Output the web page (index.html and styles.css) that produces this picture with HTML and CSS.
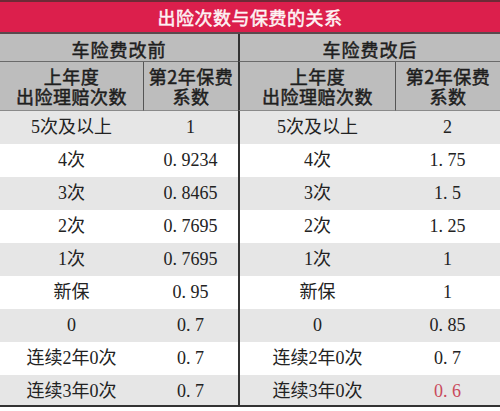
FILE: index.html
```html
<!DOCTYPE html>
<html lang="zh">
<head>
<meta charset="utf-8">
<link rel="stylesheet" href="styles.css">
</head>
<body>
<div class="sheet">
  <div class="title">出险次数与保费的关系</div>
  <div class="head">
    <div class="h1">车险费改前</div>
    <div class="h1 sep">车险费改后</div>
    <div class="h2"><span>上年度</span><span>出险理赔次数</span></div>
    <div class="h2 thin"><span>第2年保费</span><span>系数</span></div>
    <div class="h2 sep"><span>上年度</span><span>出险理赔次数</span></div>
    <div class="h2 thin"><span>第2年保费</span><span>系数</span></div>
  </div>
  <div class="row grey"><div class="c">5次及以上</div><div class="c">1</div><div class="c sep">5次及以上</div><div class="c">2</div></div>
  <div class="row"><div class="c">4次</div><div class="c">0. 9234</div><div class="c sep">4次</div><div class="c">1. 75</div></div>
  <div class="row grey"><div class="c">3次</div><div class="c">0. 8465</div><div class="c sep">3次</div><div class="c">1. 5</div></div>
  <div class="row"><div class="c">2次</div><div class="c">0. 7695</div><div class="c sep">2次</div><div class="c">1. 25</div></div>
  <div class="row grey"><div class="c">1次</div><div class="c">0. 7695</div><div class="c sep">1次</div><div class="c">1</div></div>
  <div class="row"><div class="c">新保</div><div class="c">0. 95</div><div class="c sep">新保</div><div class="c">1</div></div>
  <div class="row grey"><div class="c">0</div><div class="c">0. 7</div><div class="c sep">0</div><div class="c">0. 85</div></div>
  <div class="row"><div class="c">连续2年0次</div><div class="c">0. 7</div><div class="c sep">连续2年0次</div><div class="c">0. 7</div></div>
  <div class="row grey last"><div class="c">连续3年0次</div><div class="c">0. 7</div><div class="c sep">连续3年0次</div><div class="c red">0. 6</div></div>
</div>
</body>
</html>
```
FILE: styles.css
```css
* { box-sizing: border-box; }
html, body { margin: 0; padding: 0; background: #fff; }
.sheet { width: 500px; }
.title {
  height: 34px;
  border-top: 2px solid #6e2a36;
  border-bottom: 2px solid #5a4a4e;
  background: #dc1f4c;
  color: #fdf3f5;
  font-family: "Noto Sans CJK SC", sans-serif;
  font-weight: 400;
  -webkit-text-stroke: 0.5px #fdf3f5;
  font-size: 18px;
  letter-spacing: 0.5px;
  line-height: 30px;
  text-align: center;
}
.head {
  display: grid;
  grid-template-columns: 143px 95px 157px 105px;
  grid-template-rows: 28px 49px;
  background: #bdbdbd;
  color: #1e1e1e;
  font-family: "Noto Sans CJK SC", sans-serif;
  font-weight: 400;
  -webkit-text-stroke: 0.5px #1e1e1e;
  font-size: 18px;
}
.h1 {
  grid-column: span 2;
  border-bottom: 1px solid #6a6a6a;
  text-align: center;
  line-height: 30px;
  letter-spacing: 1px;
}
.h2 {
  display: flex;
  flex-direction: column;
  align-items: center;
  border-bottom: 1px solid #8a8a8a;
  padding-top: 4px;
  letter-spacing: 0.5px;
}
.h2 span { display: block; height: 20px; line-height: 21px; }
.thin { border-left: 1px solid #555; }
.sep { border-left: 2px solid #333; }
.row {
  display: grid;
  grid-template-columns: 143px 95px 157px 105px;
  height: 33px;
  background: #fff;
  color: #222;
  font-family: "Liberation Serif", "Noto Sans CJK SC", serif;
  font-size: 18px;
}
.row.grey { background: #e6e6e6; }
.row.last { height: 32px; border-bottom: 2px solid #333; }
.c {
  text-align: center;
  line-height: 33px;
}
.c.red { color: #c94a5c; }
```
